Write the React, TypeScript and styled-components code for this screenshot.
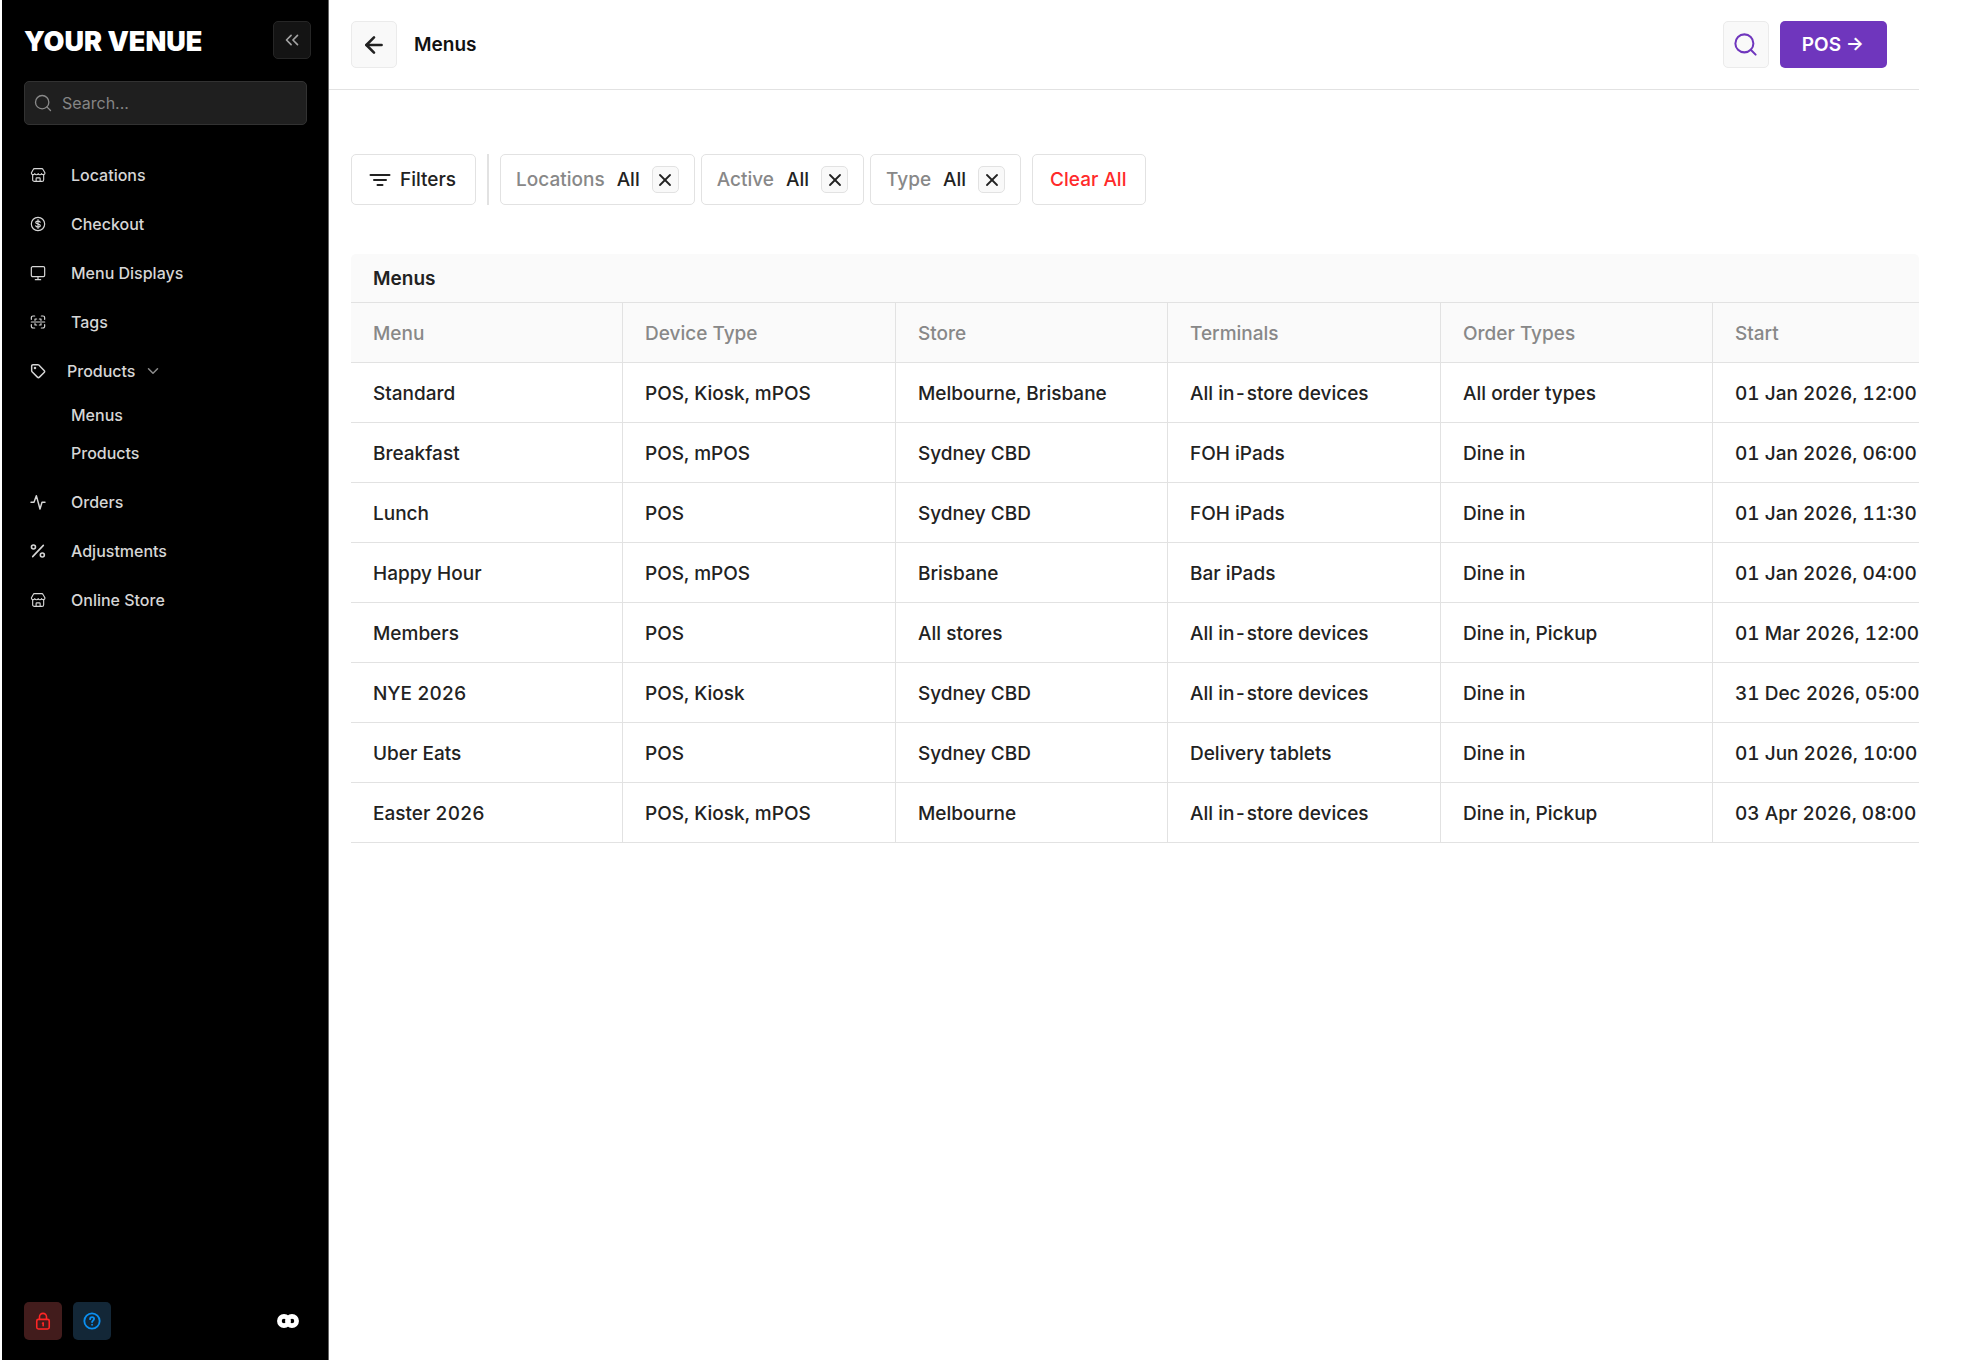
import React from "react";
import styled, { createGlobalStyle } from "styled-components";
import { ArrowLeft, ChevronDown, ChevronsLeft, Search, X } from "lucide-react";

const GlobalStyle = createGlobalStyle`
  *, *::before, *::after { box-sizing: border-box; }
  body {
    margin: 0;
    background: #fff;
    color: #222;
    font-family: Inter, "Liberation Sans", sans-serif;
  }
  button, input { font: inherit; }
  button { cursor: pointer; }
`;

const Page = styled.div`
  display: flex;
  min-height: 100vh;
  padding: 0 47px 0 2px;
`;

/* Sidebar */

const Sidebar = styled.aside`
  display: flex;
  flex-direction: column;
  flex: 0 0 327px;
  min-width: 0;
  padding: 21px 17px 20px 22px;
  background: #000;
  border-right: 1px solid #666;
  color: #d6d6d6;
`;

const Brand = styled.div`
  display: flex;
  align-items: center;
  justify-content: space-between;
  height: 38px;
`;

const BrandName = styled.span`
  padding-top: 4px;
  color: #fff;
  font-size: 27px;
  font-weight: 900;
  line-height: 38px;
  white-space: nowrap;
`;

const CollapseButton = styled.button`
  display: grid;
  place-items: center;
  width: 38px;
  height: 38px;
  padding: 0;
  background: #141414;
  border: 1px solid #262626;
  border-radius: 5px;
  color: #a3a3a3;
`;

const SearchBox = styled.label`
  display: flex;
  align-items: center;
  gap: 9px;
  height: 44px;
  margin: 22px 4px 0 0;
  padding: 0 8px;
  background: #1f1f1f;
  border: 1px solid #323232;
  border-radius: 5px;
  color: #8a8a8a;
`;

const SearchInput = styled.input`
  flex: 1;
  width: 100%;
  min-width: 0;
  padding: 0;
  background: none;
  border: 0;
  outline: 0;
  color: #dcdcdc;
  font-size: 16px;
  line-height: 24px;

  &::placeholder { color: #858585; opacity: 1; }
`;

const Nav = styled.nav`
  flex: 1;
  margin-top: 25px;
`;

const NavList = styled.ul`
  margin: 0;
  padding: 0;
  list-style: none;
`;

const NavLink = styled.a<{ $compact?: boolean }>`
  display: flex;
  align-items: center;
  gap: ${(p) => (p.$compact ? 21 : 25)}px;
  height: 49px;
  padding-left: 6px;
  color: inherit;
  font-size: 16px;
  font-weight: 500;
  line-height: 24px;
  text-decoration: none;

  svg { flex: none; }
`;

const NavLabel = styled.span`
  display: flex;
  align-items: center;
  gap: 9px;

  svg { color: #8c8c8c; }
`;

const SubList = styled(NavList)`
  padding: 1px 0 5px;
`;

const SubLink = styled.a`
  display: flex;
  align-items: center;
  height: 38px;
  padding-left: 47px;
  color: inherit;
  font-size: 16px;
  font-weight: 500;
  line-height: 24px;
  text-decoration: none;
`;

const SidebarFooter = styled.div`
  display: flex;
  align-items: center;
  gap: 11px;
  padding-right: 12px;
`;

const FooterButton = styled.button<{ $tone: "red" | "blue" }>`
  display: grid;
  place-items: center;
  width: 38px;
  height: 38px;
  padding: 0;
  border: 0;
  border-radius: 5px;
  background: ${(p) => (p.$tone === "red" ? "#421c1c" : "#132737")};
  color: ${(p) => (p.$tone === "red" ? "#ff2626" : "#0b8ff0")};
`;

const FooterLogo = styled.span`
  display: flex;
  margin-left: auto;
`;

/* Main area */

const Main = styled.main`
  flex: 1;
  min-width: 0;
`;

const Header = styled.header`
  display: flex;
  align-items: center;
  gap: 11px;
  height: 90px;
  padding: 0 32px 0 22px;
  border-bottom: 1px solid #e2e2e2;
`;

const SquareButton = styled.button<{ $accent?: boolean }>`
  display: grid;
  place-items: center;
  width: 46px;
  height: 47px;
  padding: 0;
  background: #f9f9f9;
  border: 1px solid #ebebeb;
  border-radius: 5px;
  color: ${(p) => (p.$accent ? "#6f36bd" : "#222")};
`;

const PageTitle = styled.h1`
  flex: 1;
  margin: 0;
  padding-left: 6px;
  color: #111;
  font-size: 19px;
  font-weight: 600;
  line-height: 28px;
`;

const PosButton = styled.button`
  height: 47px;
  padding: 0 23px 0 22px;
  background: #6f36bd;
  border: 0;
  border-radius: 5px;
  color: #fff;
  font-size: 19px;
  font-weight: 600;
  line-height: 28px;
  white-space: nowrap;
`;

const Content = styled.div`
  padding: 64px 0 0 22px;
`;

const FilterBar = styled.div`
  display: flex;
  align-items: stretch;
  gap: 11px;
  height: 51px;
`;

const OutlineButton = styled.button<{ $danger?: boolean }>`
  display: flex;
  align-items: center;
  gap: 9px;
  padding: 0 19px 0 17px;
  background: #fff;
  border: 1px solid #e2e2e2;
  border-radius: 5px;
  color: ${(p) => (p.$danger ? "#ff2a2a" : "#222")};
  font-size: 19px;
  font-weight: 500;
  line-height: 28px;
  white-space: nowrap;
`;

const Divider = styled.span`
  width: 2px;
  background: #e2e2e2;
`;

const Chips = styled.div`
  display: flex;
  gap: 6px;
`;

const Chip = styled.div`
  display: flex;
  align-items: center;
  gap: 12px;
  padding: 0 15px;
  border: 1px solid #e2e2e2;
  border-radius: 5px;
  font-size: 19px;
  font-weight: 500;
  line-height: 28px;
  white-space: nowrap;
`;

const ChipLabel = styled.span`
  color: #888;
`;

const ChipRemove = styled.button`
  display: grid;
  place-items: center;
  width: 27px;
  height: 27px;
  padding: 0;
  background: #f9f9f9;
  border: 1px solid #e2e2e2;
  border-radius: 5px;
  color: #222;
`;

const TableCard = styled.section`
  margin-top: 49px;
  overflow: hidden;
  border-radius: 5px 5px 0 0;
`;

const TableTitle = styled.h2`
  margin: 0;
  padding: 11px 22px 9px;
  background: #fafafa;
  font-size: 19px;
  font-weight: 600;
  line-height: 28px;
`;

const Table = styled.table`
  width: 100%;
  table-layout: fixed;
  border-spacing: 0;
  border-top: 1px solid #e2e2e2;
  font-size: 19px;
  font-variant-numeric: tabular-nums;
  line-height: 28px;
`;

const Column = styled.col<{ $width?: number }>`
  width: ${(p) => (p.$width ? `${p.$width}px` : "auto")};
`;

const HeadCell = styled.th`
  height: 60px;
  padding: 2px 22px 0;
  background: #fafafa;
  border-right: 1px solid #e2e2e2;
  border-bottom: 1px solid #e2e2e2;
  color: #888;
  font-weight: 500;
  text-align: left;
  white-space: nowrap;

  &:last-child { border-right: 0; }
`;

const Cell = styled.td`
  height: 60px;
  padding: 2px 22px 0;
  border-right: 1px solid #e2e2e2;
  border-bottom: 1px solid #e2e2e2;
  font-weight: 500;
  white-space: nowrap;

  &:last-child { border-right: 0; }
`;

/* Icons */

type LineIconProps = { size?: number; weight?: number; children: React.ReactNode };

const LineIcon = ({ size = 16, weight = 2, children }: LineIconProps) => (
  <svg
    width={size}
    height={size}
    viewBox="0 0 24 24"
    fill="none"
    stroke="currentColor"
    strokeWidth={weight}
    strokeLinecap="round"
    strokeLinejoin="round"
    aria-hidden="true"
  >
    {children}
  </svg>
);

const StoreIcon = () => (
  <LineIcon weight={1.7}>
    <path d="M4 12v7a2.600 2.600 0 0 0 2.600 2.600h11.300a2.600 2.600 0 0 0 2.600-2.600v-7" />
    <path d="M2 9 4.600 4a2.600 2.600 0 0 1 2.300-1.500h10.600A2.600 2.600 0 0 1 19.800 4L22.500 9c0 3-4.400 3.200-5.100.9-.7 2.300-4.400 2.300-5.100 0-.7 2.300-4.400 2.300-5.100 0C6.500 12.200 2 12 2 9z" />
    <path d="M9.200 21.400v-4a1 1 0 0 1 1-1h4a1 1 0 0 1 1 1v4" />
  </LineIcon>
);

const DollarIcon = () => (
  <LineIcon weight={1.8}>
    <circle cx="12" cy="12" r="10" />
    <path d="M12 5.500v13M15.300 9.200c-.5-1.100-1.700-1.600-3.300-1.600-2 0-3.400.8-3.400 2.200 0 3 6.800 1.400 6.800 4.400 0 1.400-1.400 2.300-3.400 2.300-1.800 0-3-.6-3.500-1.800" />
  </LineIcon>
);

const DisplayIcon = () => (
  <LineIcon weight={1.8}>
    <rect x="2" y="2.500" width="20" height="15" rx="2" />
    <path d="M12 17.500V22M8 22h8" />
  </LineIcon>
);

const TagsIcon = () => (
  <LineIcon weight={1.8}>
    <path d="M2 8V5.500a2.500 2.500 0 0 1 2.500-2.500H7M17 3h2.500A2.500 2.500 0 0 1 22 5.500V8M22 16v2.500a2.500 2.500 0 0 1-2.500 2.500H17M7 21H4.500A2.500 2.500 0 0 1 2 18.500V16" />
    <path d="M2 12h20M7.500 9.500V7.500H10M14 7.500h2.500v2M7.500 14.500v2H10M14 16.500h2.500v-2" />
  </LineIcon>
);

const ProductIcon = () => (
  <LineIcon weight={2.2}>
    <path d="M2.500 4.500v7.200c0 .6.2 1.100.6 1.500l8 8a2.200 2.200 0 0 0 3.100 0l7-7a2.200 2.200 0 0 0 0-3.100l-8-8a2.100 2.100 0 0 0-1.500-.6H4.500a2 2 0 0 0-2 2z" />
    <circle cx="7.500" cy="7.500" r=".8" fill="currentColor" />
  </LineIcon>
);

const OrdersIcon = () => (
  <LineIcon weight={2.2}>
    <path d="M1.500 12.500H6L9.500 2.500l5.500 20 3-10h4.500" />
  </LineIcon>
);

const PercentIcon = () => (
  <LineIcon weight={2.4}>
    <path d="M20 3.500 4 20.500" />
    <circle cx="5.200" cy="6" r="3" />
    <circle cx="18.500" cy="18" r="3" />
  </LineIcon>
);

const LockIcon = () => (
  <LineIcon size={20} weight={1.9}>
    <rect x="4.500" y="10" width="15" height="11.500" rx="2" />
    <path d="M7.800 10V7a4.200 4.200 0 0 1 8.400 0v3M11.400 14.600l.8-.4v3.400" />
  </LineIcon>
);

const HelpIcon = () => (
  <LineIcon size={20} weight={2.2}>
    <circle cx="12" cy="12" r="9.200" />
    <path d="M9.700 9.800c0-1.500 1-2.400 2.400-2.400s2.400.9 2.400 2.200c0 1.700-2.400 1.900-2.400 3.700M12.100 16.400v.1" />
  </LineIcon>
);

const FilterIcon = () => (
  <svg width="22" height="14" viewBox="0 0 22 14" fill="none" stroke="currentColor" strokeWidth="2" strokeLinecap="round" aria-hidden="true">
    <path d="M1.500 2h19M5 7h12M8.500 12h5" />
  </svg>
);

const RingsLogo = () => (
  <svg width="22" height="14" viewBox="0 0 22 14" fill="none" stroke="#fff" strokeWidth="4.700" role="img" aria-label="Company logo">
    <circle cx="7" cy="7" r="4.600" />
    <circle cx="15" cy="7" r="4.600" />
  </svg>
);

/* Data */

type NavEntry = { label: string; icon: React.ReactNode; children?: string[] };

const navEntries: NavEntry[] = [
  { label: "Locations", icon: <StoreIcon /> },
  { label: "Checkout", icon: <DollarIcon /> },
  { label: "Menu Displays", icon: <DisplayIcon /> },
  { label: "Tags", icon: <TagsIcon /> },
  { label: "Products", icon: <ProductIcon />, children: ["Menus", "Products"] },
  { label: "Orders", icon: <OrdersIcon /> },
  { label: "Adjustments", icon: <PercentIcon /> },
  { label: "Online Store", icon: <StoreIcon /> },
];

const filters = ["Locations", "Active", "Type"];

const columns: { title: string; width?: number }[] = [
  { title: "Menu", width: 272 },
  { title: "Device Type", width: 273 },
  { title: "Store", width: 272 },
  { title: "Terminals", width: 273 },
  { title: "Order Types", width: 272 },
  { title: "Start" },
];

const rows = [
  ["Standard", "POS, Kiosk, mPOS", "Melbourne, Brisbane", "All in-store devices", "All order types", "01 Jan 2026, 12:00"],
  ["Breakfast", "POS, mPOS", "Sydney CBD", "FOH iPads", "Dine in", "01 Jan 2026, 06:00"],
  ["Lunch", "POS", "Sydney CBD", "FOH iPads", "Dine in", "01 Jan 2026, 11:30"],
  ["Happy Hour", "POS, mPOS", "Brisbane", "Bar iPads", "Dine in", "01 Jan 2026, 04:00"],
  ["Members", "POS", "All stores", "All in-store devices", "Dine in, Pickup", "01 Mar 2026, 12:00"],
  ["NYE 2026", "POS, Kiosk", "Sydney CBD", "All in-store devices", "Dine in", "31 Dec 2026, 05:00"],
  ["Uber Eats", "POS", "Sydney CBD", "Delivery tablets", "Dine in", "01 Jun 2026, 10:00"],
  ["Easter 2026", "POS, Kiosk, mPOS", "Melbourne", "All in-store devices", "Dine in, Pickup", "03 Apr 2026, 08:00"],
];

export default function App() {
  return (
    <>
      <GlobalStyle />
      <Page>
        <Sidebar>
          <Brand>
            <BrandName>YOUR VENUE</BrandName>
            <CollapseButton type="button" aria-label="Collapse sidebar">
              <ChevronsLeft size={22} strokeWidth={1.8} />
            </CollapseButton>
          </Brand>
          <SearchBox>
            <Search size={20} strokeWidth={1.6} aria-hidden="true" />
            <SearchInput type="text" placeholder="Search..." aria-label="Search" />
          </SearchBox>
          <Nav aria-label="Main">
            <NavList>
              {navEntries.map((entry) => (
                <li key={entry.label}>
                  <NavLink href="#" $compact={Boolean(entry.children)}>
                    {entry.icon}
                    <NavLabel>
                      {entry.label}
                      {entry.children && <ChevronDown size={18} strokeWidth={2} aria-hidden="true" />}
                    </NavLabel>
                  </NavLink>
                  {entry.children && (
                    <SubList>
                      {entry.children.map((child) => (
                        <li key={child}>
                          <SubLink href="#">{child}</SubLink>
                        </li>
                      ))}
                    </SubList>
                  )}
                </li>
              ))}
            </NavList>
          </Nav>
          <SidebarFooter>
            <FooterButton type="button" $tone="red" aria-label="Lock">
              <LockIcon />
            </FooterButton>
            <FooterButton type="button" $tone="blue" aria-label="Help">
              <HelpIcon />
            </FooterButton>
            <FooterLogo>
              <RingsLogo />
            </FooterLogo>
          </SidebarFooter>
        </Sidebar>

        <Main>
          <Header>
            <SquareButton type="button" aria-label="Back">
              <ArrowLeft size={26} strokeWidth={2.4} />
            </SquareButton>
            <PageTitle>Menus</PageTitle>
            <SquareButton type="button" $accent aria-label="Search">
              <Search size={27} strokeWidth={1.8} />
            </SquareButton>
            <PosButton type="button">POS →</PosButton>
          </Header>

          <Content>
            <FilterBar>
              <OutlineButton type="button">
                <FilterIcon />
                Filters
              </OutlineButton>
              <Divider />
              <Chips>
                {filters.map((name) => (
                  <Chip key={name}>
                    <ChipLabel>{name}</ChipLabel>
                    <span>All</span>
                    <ChipRemove type="button" aria-label={`Clear ${name}`}>
                      <X size={20} strokeWidth={2.2} />
                    </ChipRemove>
                  </Chip>
                ))}
              </Chips>
              <OutlineButton type="button" $danger>
                Clear All
              </OutlineButton>
            </FilterBar>

            <TableCard>
              <TableTitle id="menus-title">Menus</TableTitle>
              <Table aria-labelledby="menus-title">
                <colgroup>
                  {columns.map((c) => (
                    <Column key={c.title} $width={c.width} />
                  ))}
                </colgroup>
                <thead>
                  <tr>
                    {columns.map((c) => (
                      <HeadCell key={c.title} scope="col">
                        {c.title}
                      </HeadCell>
                    ))}
                  </tr>
                </thead>
                <tbody>
                  {rows.map((row) => (
                    <tr key={row[0]}>
                      {row.map((value, i) => (
                        <Cell key={columns[i].title}>{value}</Cell>
                      ))}
                    </tr>
                  ))}
                </tbody>
              </Table>
            </TableCard>
          </Content>
        </Main>
      </Page>
    </>
  );
}
